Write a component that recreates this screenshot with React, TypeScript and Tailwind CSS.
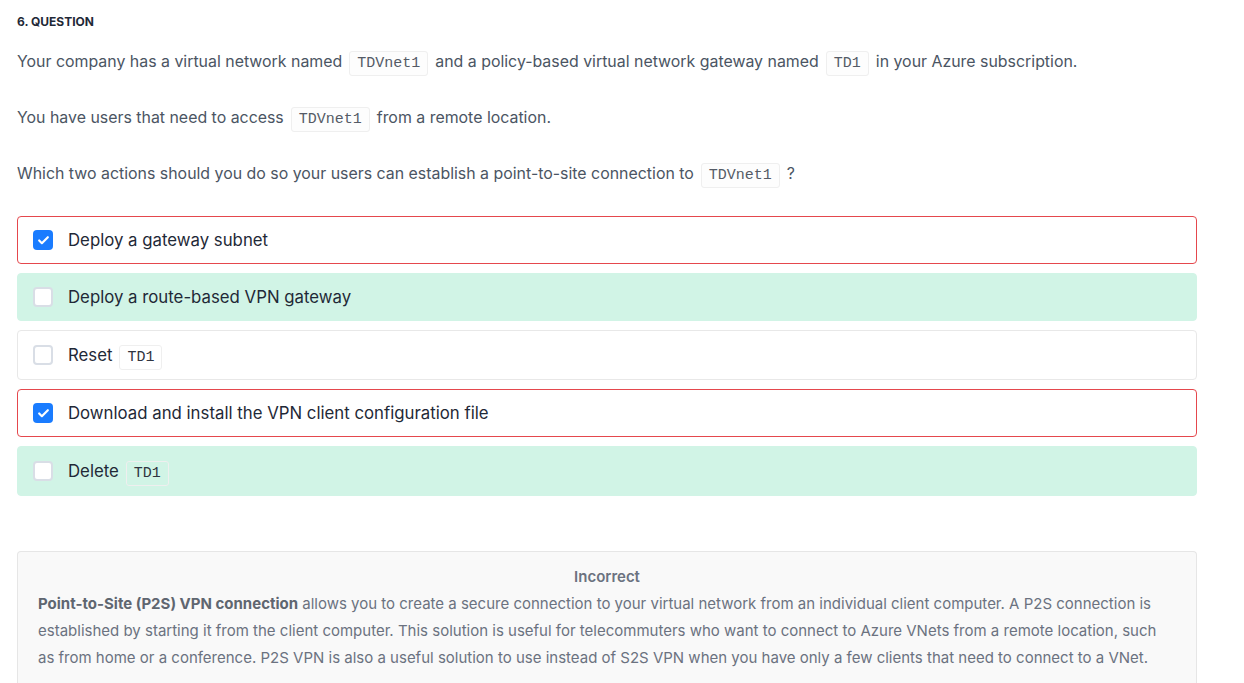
import { Check } from "lucide-react";

const options = [
  { label: "Deploy a gateway subnet", checked: true, state: "wrong" },
  { label: "Deploy a route-based VPN gateway", checked: false, state: "right" },
  { label: "Reset", code: "TD1", checked: false, state: "none" },
  { label: "Download and install the VPN client configuration file", checked: true, state: "wrong" },
  { label: "Delete", code: "TD1", checked: false, state: "right" },
];

function Code({ children, tint }: { children: string; tint?: boolean }) {
  return (
    <code
      className={`mx-[7px] rounded-[3px] border border-[#efefef] px-[7px] py-[3px] text-[15px] leading-[17px] ${
        tint ? "bg-transparent text-[#2f3440]" : "bg-[#fdfdfd] text-[#555b66]"
      }`}
      style={{ fontFamily: '"Liberation Mono", monospace' }}
    >
      {children}
    </code>
  );
}

export default function App() {
  return (
    <div className="min-h-screen bg-white px-[17px] pt-[14px]" style={{ fontFamily: "Inter, sans-serif" }}>
      <h3 className="text-[12px] font-bold leading-[16px] text-[#1f2937]">6. QUESTION</h3>

      {/* Question text */}
      <div className="mt-[20px] flex flex-col gap-[32px] text-[15.9px] leading-[24px] text-[#4b5563]">
        <p>
          Your company has a virtual network named<Code>TDVnet1</Code>and a policy-based virtual network gateway named
          <Code>TD1</Code>in your Azure subscription.
        </p>
        <p>
          You have users that need to access<Code>TDVnet1</Code>from a remote location.
        </p>
        <p>
          Which two actions should you do so your users can establish a point-to-site connection to<Code>TDVnet1</Code>?
        </p>
      </div>

      {/* Options */}
      <div className="mt-[30px] flex w-[1180px] flex-col gap-[9px]">
        {options.map((o, idx) => (
          <div
            key={idx}
            className={`flex items-center gap-[15px] rounded-[4px] border px-[15px] ${o.code ? "h-[50px]" : "h-[48px]"} ${
              o.state === "wrong"
                ? "border-[#e5484d] bg-white"
                : o.state === "right"
                  ? "border-[#d1f4e6] bg-[#d1f4e6]"
                  : "border-[#e8e8e8] bg-white"
            }`}
          >
            <span
              className={`flex h-[20px] w-[20px] shrink-0 items-center justify-center rounded-[4px] ${
                o.checked ? "bg-[#1a7cff]" : "border-2 border-[#d9dee6] bg-white"
              }`}
            >
              {o.checked && <Check size={13} strokeWidth={4} className="text-white" />}
            </span>
            <span className="text-[16.8px] leading-[24px] text-[#1f2937]">
              {o.label}
              {o.code && <Code tint>{o.code}</Code>}
            </span>
          </div>
        ))}
      </div>

      {/* Explanation */}
      <div className="mt-[55px] w-[1180px] rounded-t-[4px] border border-b-0 border-[#e6e6e6] bg-[#f9f9f9] px-[20px] pt-[14px] pb-[20px]">
        <p className="text-center text-[15px] font-semibold leading-[22px] text-[#6b7280]">Incorrect</p>
        <p className="mt-[2px] text-[15px] leading-[27px] text-[#6b7280]">
          <span className="font-bold text-[#5f6670]">Point-to-Site (P2S) VPN connection</span> allows you to create a
          secure connection to your virtual network from an individual client computer. A P2S connection is established by
          starting it from the client computer. This solution is useful for telecommuters who want to connect to Azure VNets
          from a remote location, such as from home or a conference. P2S VPN is also a useful solution to use instead of S2S
          VPN when you have only a few clients that need to connect to a VNet.
        </p>
      </div>
    </div>
  );
}
